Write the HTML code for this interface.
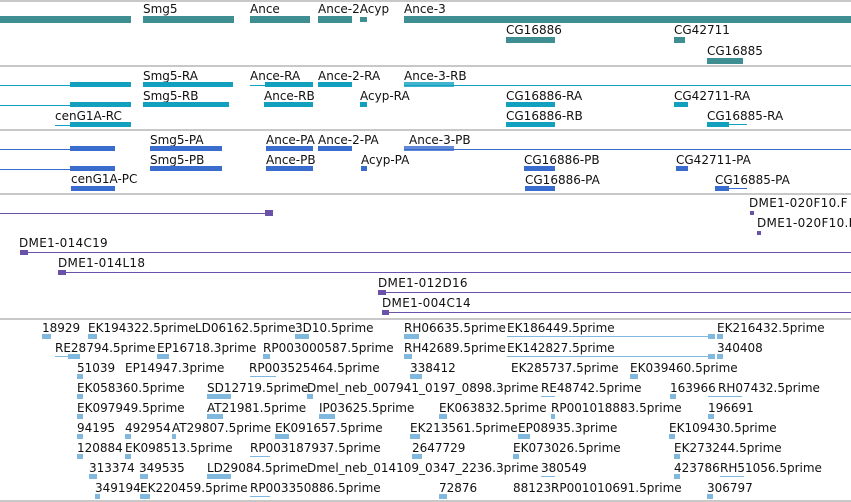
<!DOCTYPE html>
<html><head><meta charset="utf-8"><style>
*{margin:0;padding:0}
body{width:851px;height:502px;position:relative;overflow:hidden;background:#fff;font-family:"DejaVu Sans","Liberation Sans",sans-serif;font-size:12px;color:#111}
.t{position:absolute;line-height:14px;white-space:nowrap;margin-top:1px}
.b{position:absolute}
.hr{position:absolute;left:0;width:851px;height:2px;background:#c8c8c8}
.g{background:#3f8f92}.c{background:#13a0bf}.p{background:#3a6ccd}.v{background:#6a52a8}.l{background:#80b8de}
.d{letter-spacing:0.3px}
</style></head><body>
<div class="hr" style="top:0"></div>
<div class="hr" style="top:65px"></div>
<div class="hr" style="top:129px"></div>
<div class="hr" style="top:193px"></div>
<div class="hr" style="top:318px"></div>
<div class="hr" style="top:500px"></div>

<!-- track 1 -->
<div class="b g" style="left:0;top:16px;width:131px;height:7px"></div>
<div class="b g" style="left:143px;top:16px;width:91px;height:7px"></div>
<div class="b g" style="left:250px;top:16px;width:60px;height:7px"></div>
<div class="b g" style="left:318px;top:16px;width:34px;height:7px"></div>
<div class="b g" style="left:360px;top:17px;width:7px;height:5px"></div>
<div class="b g" style="left:404px;top:16px;width:447px;height:7px"></div>
<div class="t" style="left:143px;top:1px">Smg5</div>
<div class="t" style="left:250px;top:1px">Ance</div>
<div class="t" style="left:318px;top:1px">Ance-2Acyp</div>
<div class="t" style="left:404px;top:1px">Ance-3</div>
<div class="t" style="left:506px;top:22px">CG16886</div>
<div class="b g" style="left:506px;top:37px;width:49px;height:6px"></div>
<div class="t" style="left:674px;top:22px">CG42711</div>
<div class="b g" style="left:674px;top:37px;width:11px;height:6px"></div>
<div class="t" style="left:707px;top:43px">CG16885</div>
<div class="b g" style="left:707px;top:58px;width:36px;height:6px"></div>

<!-- track 2 -->
<div class="b c" style="left:0;top:85px;width:131px;height:1px"></div>
<div class="b c" style="left:70px;top:82px;width:61px;height:5px"></div>
<div class="b c" style="left:0;top:105px;width:131px;height:1px"></div>
<div class="b c" style="left:70px;top:102px;width:61px;height:5px"></div>
<div class="t" style="left:55px;top:108px">cenG1A-RC</div>
<div class="b c" style="left:55px;top:125px;width:76px;height:1px"></div>
<div class="b c" style="left:70px;top:122px;width:61px;height:5px"></div>
<div class="t" style="left:143px;top:68px">Smg5-RA</div>
<div class="b c" style="left:143px;top:82px;width:90px;height:5px"></div>
<div class="t" style="left:143px;top:88px">Smg5-RB</div>
<div class="b c" style="left:143px;top:102px;width:86px;height:5px"></div>
<div class="t" style="left:250px;top:68px">Ance-RA</div>
<div class="b c" style="left:250px;top:85px;width:63px;height:1px"></div>
<div class="b c" style="left:265px;top:82px;width:48px;height:5px"></div>
<div class="t" style="left:264px;top:88px">Ance-RB</div>
<div class="b c" style="left:264px;top:102px;width:49px;height:5px"></div>
<div class="t" style="left:318px;top:68px">Ance-2-RA</div>
<div class="b c" style="left:318px;top:82px;width:34px;height:5px"></div>
<div class="t" style="left:360px;top:88px">Acyp-RA</div>
<div class="b c" style="left:360px;top:102px;width:7px;height:5px"></div>
<div class="t" style="left:404px;top:68px">Ance-3-RB</div>
<div class="b c" style="left:404px;top:85px;width:447px;height:1px"></div>
<div class="b c" style="left:404px;top:82px;width:50px;height:5px;opacity:.8"></div>
<div class="t" style="left:506px;top:88px">CG16886-RA</div>
<div class="b c" style="left:506px;top:102px;width:49px;height:5px"></div>
<div class="t" style="left:506px;top:108px">CG16886-RB</div>
<div class="b c" style="left:506px;top:122px;width:49px;height:5px"></div>
<div class="t" style="left:674px;top:88px">CG42711-RA</div>
<div class="b c" style="left:674px;top:102px;width:14px;height:5px"></div>
<div class="t" style="left:707px;top:108px">CG16885-RA</div>
<div class="b c" style="left:707px;top:122px;width:22px;height:5px"></div>
<div class="b c" style="left:707px;top:124px;width:40px;height:1px"></div>

<!-- track 3 -->
<div class="b p" style="left:0;top:149px;width:115px;height:1px"></div>
<div class="b p" style="left:70px;top:146px;width:45px;height:5px"></div>
<div class="b p" style="left:0;top:169px;width:115px;height:1px"></div>
<div class="b p" style="left:70px;top:166px;width:45px;height:5px"></div>
<div class="t" style="left:71px;top:171px">cenG1A-PC</div>
<div class="b p" style="left:71px;top:186px;width:44px;height:5px"></div>
<div class="t" style="left:150px;top:132px">Smg5-PA</div>
<div class="b p" style="left:150px;top:146px;width:72px;height:5px"></div>
<div class="t" style="left:150px;top:152px">Smg5-PB</div>
<div class="b p" style="left:150px;top:166px;width:72px;height:5px"></div>
<div class="t" style="left:266px;top:132px">Ance-PA</div>
<div class="b p" style="left:266px;top:146px;width:47px;height:5px"></div>
<div class="t" style="left:266px;top:152px">Ance-PB</div>
<div class="b p" style="left:266px;top:166px;width:47px;height:5px"></div>
<div class="t" style="left:318px;top:132px">Ance-2-PA</div>
<div class="b p" style="left:318px;top:146px;width:34px;height:5px"></div>
<div class="t" style="left:361px;top:152px">Acyp-PA</div>
<div class="b p" style="left:361px;top:166px;width:6px;height:5px"></div>
<div class="t" style="left:409px;top:132px">Ance-3-PB</div>
<div class="b p" style="left:404px;top:149px;width:447px;height:1px"></div>
<div class="b p" style="left:404px;top:146px;width:50px;height:5px;opacity:.8"></div>
<div class="t" style="left:524px;top:152px">CG16886-PB</div>
<div class="b p" style="left:524px;top:166px;width:31px;height:5px"></div>
<div class="t" style="left:525px;top:172px">CG16886-PA</div>
<div class="b p" style="left:525px;top:186px;width:30px;height:5px"></div>
<div class="t" style="left:676px;top:152px">CG42711-PA</div>
<div class="b p" style="left:676px;top:166px;width:12px;height:5px"></div>
<div class="t" style="left:715px;top:172px">CG16885-PA</div>
<div class="b p" style="left:715px;top:186px;width:14px;height:5px"></div>
<div class="b p" style="left:715px;top:188px;width:32px;height:1px"></div>

<!-- track 4 -->
<div class="b v" style="left:0;top:213px;width:270px;height:1px"></div>
<div class="b v" style="left:265px;top:210px;width:8px;height:6px"></div>
<div class="t d" style="left:749px;top:195px">DME1-020F10.F</div>
<div class="b v" style="left:750px;top:211px;width:4px;height:4px"></div>
<div class="t d" style="left:757px;top:215px">DME1-020F10.F</div>
<div class="b v" style="left:757px;top:231px;width:4px;height:4px"></div>
<div class="t d" style="left:19px;top:235px">DME1-014C19</div>
<div class="b v" style="left:20px;top:252px;width:831px;height:1px"></div>
<div class="b v" style="left:20px;top:250px;width:8px;height:5px"></div>
<div class="t d" style="left:58px;top:255px">DME1-014L18</div>
<div class="b v" style="left:58px;top:272px;width:793px;height:1px"></div>
<div class="b v" style="left:58px;top:270px;width:8px;height:5px"></div>
<div class="t d" style="left:378px;top:275px">DME1-012D16</div>
<div class="b v" style="left:378px;top:292px;width:473px;height:1px"></div>
<div class="b v" style="left:378px;top:290px;width:8px;height:5px"></div>
<div class="t d" style="left:382px;top:295px">DME1-004C14</div>
<div class="b v" style="left:382px;top:312px;width:469px;height:1px"></div>
<div class="b v" style="left:382px;top:310px;width:7px;height:5px"></div>

<!-- track 5 -->
<div class="t" style="left:42px;top:320px">18929</div><div class="b l" style="left:42px;top:334px;width:9px;height:5px"></div>
<div class="t" style="left:88px;top:320px">EK194322.5prime</div><div class="b l" style="left:88px;top:334px;width:9px;height:5px"></div>
<div class="t" style="left:195px;top:320px">LD06162.5prime</div>
<div class="t" style="left:295px;top:320px">3D10.5prime</div><div class="b l" style="left:295px;top:334px;width:14px;height:5px"></div>
<div class="t" style="left:404px;top:320px">RH06635.5prime</div><div class="b l" style="left:404px;top:334px;width:15px;height:5px"></div>
<div class="t" style="left:507px;top:320px">EK186449.5prime</div><div class="b l" style="left:507px;top:336px;width:208px;height:1px"></div><div class="b l" style="left:708px;top:334px;width:7px;height:5px"></div>
<div class="t" style="left:717px;top:320px">EK216432.5prime</div><div class="b l" style="left:717px;top:334px;width:6px;height:5px"></div>

<div class="t" style="left:55px;top:340px">RE28794.5prime</div><div class="b l" style="left:55px;top:356px;width:25px;height:1px"></div><div class="b l" style="left:68px;top:354px;width:12px;height:5px"></div>
<div class="t" style="left:157px;top:340px">EP16718.3prime</div><div class="b l" style="left:157px;top:354px;width:12px;height:5px"></div>
<div class="t" style="left:263px;top:340px">RP003000587.5prime</div><div class="b l" style="left:263px;top:354px;width:7px;height:5px"></div>
<div class="t" style="left:404px;top:340px">RH42689.5prime</div><div class="b l" style="left:404px;top:354px;width:8px;height:5px"></div>
<div class="t" style="left:507px;top:340px">EK142827.5prime</div><div class="b l" style="left:507px;top:356px;width:208px;height:1px"></div><div class="b l" style="left:708px;top:354px;width:7px;height:5px"></div>
<div class="t" style="left:717px;top:340px">340408</div><div class="b l" style="left:717px;top:354px;width:6px;height:5px"></div>

<div class="t" style="left:77px;top:360px">51039</div><div class="b l" style="left:77px;top:374px;width:6px;height:5px"></div>
<div class="t" style="left:125px;top:360px">EP14947.3prime</div>
<div class="t" style="left:249px;top:360px">RP003525464.5prime</div><div class="b l" style="left:250px;top:376px;width:26px;height:1px"></div>
<div class="t" style="left:410px;top:360px">338412</div><div class="b l" style="left:410px;top:374px;width:12px;height:5px"></div>
<div class="t" style="left:511px;top:360px">EK285737.5prime</div>
<div class="t" style="left:630px;top:360px">EK039460.5prime</div><div class="b l" style="left:630px;top:374px;width:8px;height:5px"></div>

<div class="t" style="left:77px;top:380px">EK058360.5prime</div><div class="b l" style="left:77px;top:394px;width:6px;height:5px"></div>
<div class="t" style="left:207px;top:380px">SD12719.5prime</div><div class="b l" style="left:207px;top:394px;width:24px;height:5px"></div>
<div class="t" style="left:307px;top:380px">Dmel_neb_007941_0197_0898.3prime</div><div class="b l" style="left:307px;top:394px;width:6px;height:5px"></div>
<div class="t" style="left:541px;top:380px">RE48742.5prime</div><div class="b l" style="left:541px;top:396px;width:14px;height:1px"></div>
<div class="t" style="left:670px;top:380px">163966</div><div class="b l" style="left:670px;top:394px;width:6px;height:5px"></div>
<div class="t" style="left:718px;top:380px">RH07432.5prime</div><div class="b l" style="left:708px;top:396px;width:34px;height:1px"></div>

<div class="t" style="left:77px;top:400px">EK097949.5prime</div><div class="b l" style="left:77px;top:414px;width:6px;height:5px"></div>
<div class="t" style="left:207px;top:400px">AT21981.5prime</div><div class="b l" style="left:207px;top:414px;width:16px;height:5px"></div>
<div class="t" style="left:319px;top:400px">IP03625.5prime</div><div class="b l" style="left:319px;top:414px;width:16px;height:5px"></div>
<div class="t" style="left:439px;top:400px">EK063832.5prime</div><div class="b l" style="left:439px;top:414px;width:8px;height:5px"></div>
<div class="t" style="left:551px;top:400px">RP001018883.5prime</div><div class="b l" style="left:551px;top:414px;width:4px;height:5px"></div>
<div class="t" style="left:708px;top:400px">196691</div><div class="b l" style="left:708px;top:414px;width:6px;height:5px"></div>

<div class="t" style="left:77px;top:420px">94195</div><div class="b l" style="left:77px;top:434px;width:6px;height:5px"></div>
<div class="t" style="left:125px;top:420px">492954</div><div class="b l" style="left:125px;top:434px;width:6px;height:5px"></div>
<div class="t" style="left:172px;top:420px">AT29807.5prime</div><div class="b l" style="left:172px;top:434px;width:4px;height:5px"></div>
<div class="t" style="left:275px;top:420px">EK091657.5prime</div><div class="b l" style="left:275px;top:434px;width:14px;height:5px"></div>
<div class="t" style="left:410px;top:420px">EK213561.5prime</div><div class="b l" style="left:410px;top:434px;width:10px;height:5px"></div>
<div class="t" style="left:518px;top:420px">EP08935.3prime</div><div class="b l" style="left:518px;top:434px;width:12px;height:5px"></div>
<div class="t" style="left:669px;top:420px">EK109430.5prime</div><div class="b l" style="left:669px;top:434px;width:6px;height:5px"></div>

<div class="t" style="left:77px;top:440px">120884</div><div class="b l" style="left:77px;top:454px;width:6px;height:5px"></div>
<div class="t" style="left:125px;top:440px">EK098513.5prime</div><div class="b l" style="left:125px;top:454px;width:6px;height:5px"></div>
<div class="t" style="left:250px;top:440px">RP003187937.5prime</div><div class="b l" style="left:250px;top:456px;width:20px;height:1px"></div>
<div class="t" style="left:412px;top:440px">2647729</div><div class="b l" style="left:412px;top:454px;width:10px;height:5px"></div>
<div class="t" style="left:513px;top:440px">EK073026.5prime</div><div class="b l" style="left:513px;top:454px;width:6px;height:5px"></div>
<div class="t" style="left:674px;top:440px">EK273244.5prime</div><div class="b l" style="left:674px;top:454px;width:6px;height:5px"></div>

<div class="t" style="left:89px;top:460px">313374</div><div class="b l" style="left:89px;top:474px;width:8px;height:5px"></div>
<div class="t" style="left:139px;top:460px">349535</div><div class="b l" style="left:140px;top:474px;width:8px;height:5px"></div>
<div class="t" style="left:207px;top:460px">LD29084.5prime</div><div class="b l" style="left:207px;top:474px;width:24px;height:5px"></div>
<div class="t" style="left:307px;top:460px">Dmel_neb_014109_0347_2236.3prime</div>
<div class="t" style="left:541px;top:460px">380549</div><div class="b l" style="left:541px;top:476px;width:14px;height:1px"></div>
<div class="t" style="left:674px;top:460px">423786</div><div class="b l" style="left:674px;top:474px;width:6px;height:5px"></div>
<div class="t" style="left:720px;top:460px">RH51056.5prime</div><div class="b l" style="left:720px;top:476px;width:24px;height:1px"></div>

<div class="t" style="left:95px;top:480px">349194</div><div class="b l" style="left:95px;top:494px;width:5px;height:5px"></div>
<div class="t" style="left:140px;top:480px">EK220459.5prime</div><div class="b l" style="left:140px;top:494px;width:10px;height:5px"></div>
<div class="t" style="left:250px;top:480px">RP003350886.5prime</div><div class="b l" style="left:250px;top:496px;width:20px;height:1px"></div>
<div class="t" style="left:439px;top:480px">72876</div><div class="b l" style="left:439px;top:494px;width:8px;height:5px"></div>
<div class="t" style="left:513px;top:480px">88123</div>
<div class="t" style="left:551px;top:480px">RP001010691.5prime</div>
<div class="t" style="left:707px;top:480px">306797</div><div class="b l" style="left:707px;top:494px;width:6px;height:5px"></div>
</body></html>
